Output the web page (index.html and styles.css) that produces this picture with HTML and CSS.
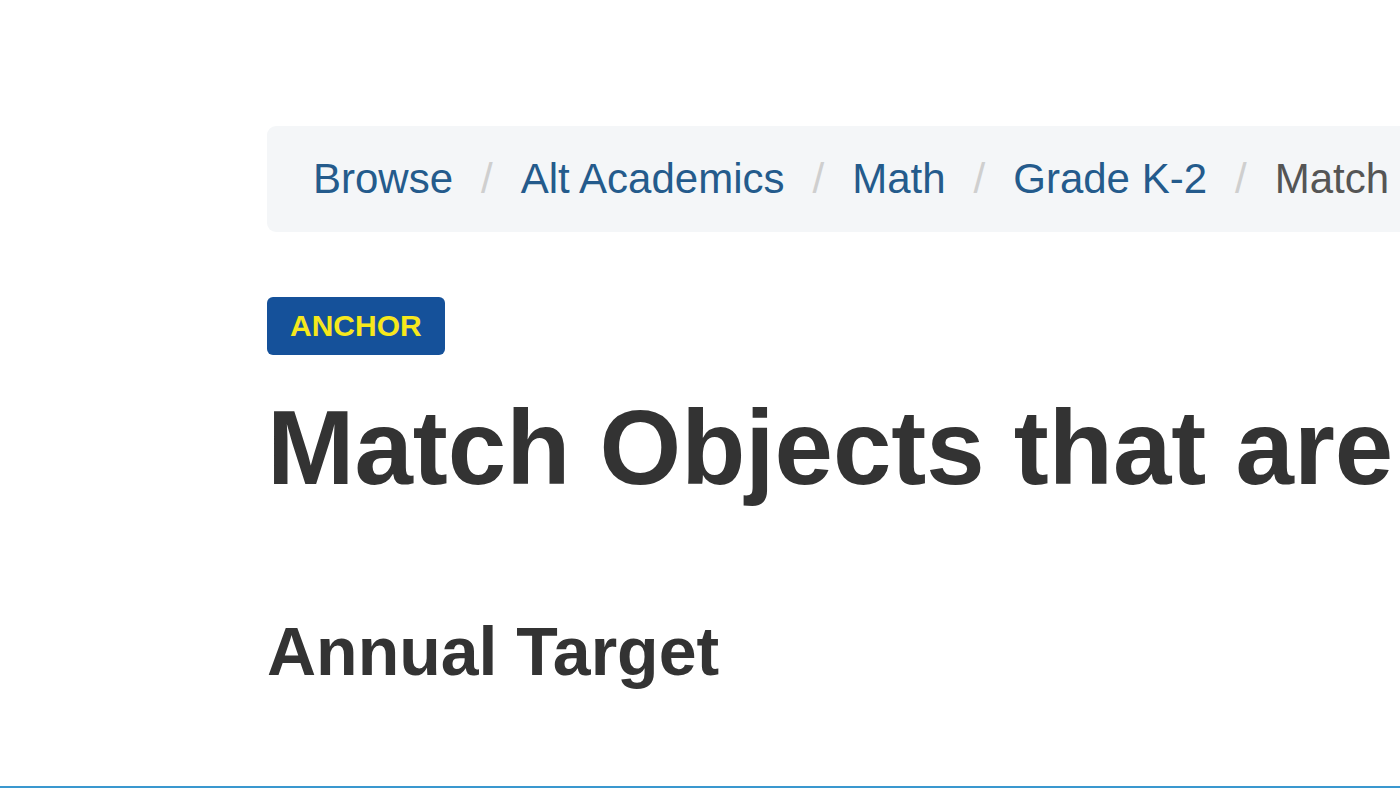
FILE: index.html
```html
<!DOCTYPE html>
<html lang="en">
<head>
<meta charset="utf-8">
<title>Match Objects that are the Same</title>
<link rel="stylesheet" href="styles.css">
</head>
<body>
<div class="page">
  <main class="content">
    <nav class="breadcrumb">
      <a class="crumb" href="#">Browse</a>
      <span class="sep">/</span>
      <a class="crumb" href="#">Alt Academics</a>
      <span class="sep">/</span>
      <a class="crumb" href="#">Math</a>
      <span class="sep">/</span>
      <a class="crumb" href="#">Grade K-2</a>
      <span class="sep">/</span>
      <span class="crumb current">Match Objects that are the Same</span>
    </nav>
    <div class="badge-row"><span class="badge">ANCHOR</span></div>
    <h1 class="title">Match Objects that are the Same</h1>
    <h2 class="subtitle">Annual Target</h2>
  </main>
  <div class="bottom-bar"></div>
</div>
</body>
</html>
```

FILE: styles.css
```css
html, body {
  margin: 0;
  padding: 0;
  background: #ffffff;
  overflow: hidden;
}
body {
  width: 1400px;
  height: 788px;
  font-family: "Liberation Sans", Arial, Helvetica, sans-serif;
  color: #333333;
}
.page {
  position: relative;
  width: 1400px;
  height: 788px;
  overflow: hidden;
}
.content {
  padding: 126px 0 0 267px;
  white-space: nowrap;
}
.breadcrumb {
  display: flex;
  align-items: center;
  height: 106px;
  width: 1400px;
  box-sizing: border-box;
  padding-left: 46px;
  background: #f4f6f8;
  border-radius: 9px;
  font-size: 42px;
  line-height: 1.2;
}
.crumb {
  color: #245b8c;
  text-decoration: none;
}
.crumb.current {
  color: #555555;
}
.sep {
  color: #cfcfcf;
  padding: 0 28px;
}
.badge-row {
  display: flex;
  margin-top: 65px;
}
.badge {
  display: inline-block;
  background: #15519a;
  color: #f6e81c;
  font-weight: bold;
  font-size: 30px;
  line-height: 36px;
  padding: 11px 23px;
  border-radius: 6px;
}
.title {
  margin: 30px 0 0 0;
  font-size: 105px;
  line-height: 1.2;
  font-weight: bold;
  color: #333333;
}
.subtitle {
  margin: 100px 0 0 0;
  font-size: 68px;
  line-height: 1.2;
  font-weight: bold;
  color: #333333;
}
.bottom-bar {
  position: absolute;
  left: 0;
  right: 0;
  bottom: 0;
  height: 2px;
  background: #3a98cf;
}
```
